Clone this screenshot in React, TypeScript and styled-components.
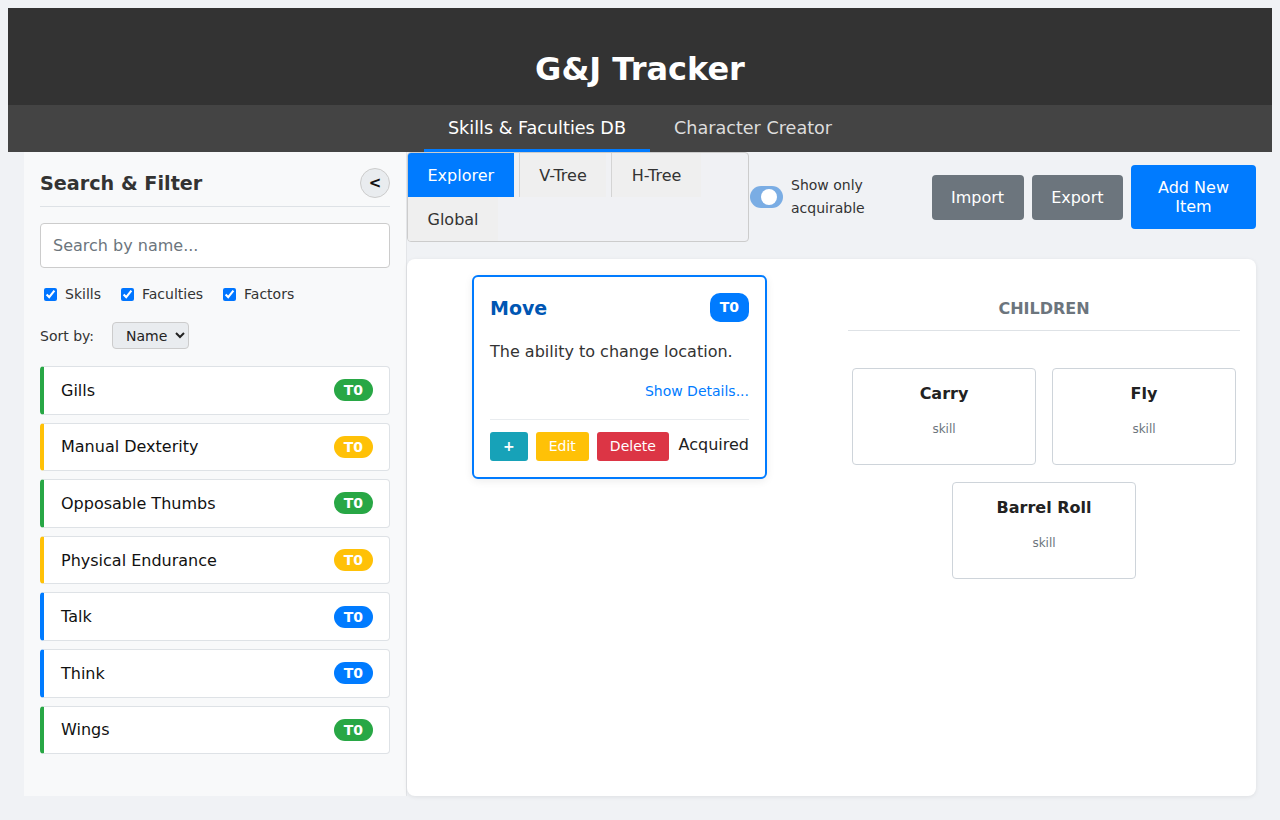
import React from "react";
import styled, { createGlobalStyle } from "styled-components";

const GlobalStyle = createGlobalStyle`
  html, body { height: 100%; }
  body {
    margin: 8px;
    background: #f0f2f5;
    font-family: "DejaVu Sans", "Noto Sans", sans-serif;
    color: #333;
  }
  * { box-sizing: border-box; }
`;

const Header = styled.header`
  background: #333;
  padding: 43px 0 17px;
  text-align: center;
`;

const Title = styled.h1`
  margin: 0;
  color: #fff;
  font-size: 32px;
  line-height: 37px;
  font-weight: 700;
`;

const Nav = styled.nav`
  background: #444;
  display: flex;
  justify-content: center;
`;

const NavTab = styled.div<{ $active?: boolean }>`
  padding: 12px 24px 9px;
  font-size: 17.6px;
  line-height: 23px;
  color: ${(p) => (p.$active ? "#fff" : "#ddd")};
  border-bottom: 3px solid ${(p) => (p.$active ? "#007bff" : "transparent")};
`;

const Content = styled.div`
  display: flex;
  height: 644px;
  padding: 0 16px;
  box-sizing: content-box;
  padding-bottom: 16px;
`;

const Sidebar = styled.aside`
  width: 383px;
  flex: 0 0 383px;
  background: #f8f9fa;
  border-right: 1px solid #e3e5e8;
  padding: 16px;
  display: flex;
  flex-direction: column;
`;

const SideHead = styled.div`
  display: flex;
  align-items: center;
  justify-content: space-between;
  padding-bottom: 8px;
  border-bottom: 1px solid #dee2e6;
`;

const SideTitle = styled.h2`
  margin: 0;
  font-size: 19.2px;
  font-weight: 700;
  color: #333;
`;

const CollapseBtn = styled.button`
  width: 30px;
  height: 30px;
  border-radius: 50%;
  border: 1px solid #ccc;
  background: #e9ecef;
  color: #111;
  font-family: inherit;
  font-weight: 700;
  font-size: 15px;
  padding: 0;
  display: flex;
  align-items: center;
  justify-content: center;
`;

const SearchInput = styled.input`
  margin-top: 16px;
  width: 100%;
  height: 45px;
  padding: 12px;
  font-size: 16px;
  font-family: inherit;
  border: 1px solid #ccc;
  border-radius: 4px;
  background: #fff;
  &::placeholder { color: #6c757d; }
`;

const CheckRow = styled.div`
  display: flex;
  align-items: center;
  margin-top: 16px;
  height: 20px;
`;

const CheckLabel = styled.label`
  display: flex;
  align-items: center;
  font-size: 14px;
  color: #333;
  margin-right: 16px;
  input {
    margin: 0 8px 0 4px;
    width: 13px;
    height: 13px;
    accent-color: #0075ff;
  }
`;

const SortRow = styled.div`
  display: flex;
  align-items: center;
  gap: 18px;
  margin-top: 18px;
  font-size: 14px;
`;

const Select = styled.select`
  height: 27px;
  width: 77px;
  padding: 0 4px 0 9px;
  font-family: inherit;
  font-size: 14px;
  color: #222;
  border: 1px solid #ccc;
  border-radius: 4px;
  background: #e9ecef;
`;

const List = styled.div`
  margin-top: 17px;
  display: flex;
  flex-direction: column;
  gap: 8px;
`;

const ItemRow = styled.div<{ $color: string }>`
  display: flex;
  align-items: center;
  justify-content: space-between;
  background: #fff;
  border: 1px solid #dee2e6;
  border-left: 4px solid ${(p) => p.$color};
  border-radius: 4px;
  padding: 0 16px 0 17px;
  height: 48.6px;
  font-size: 16px;
  color: #111;
`;

const Pill = styled.span<{ $color: string }>`
  background: ${(p) => p.$color};
  color: #fff;
  font-weight: 700;
  font-size: 14px;
  line-height: 16px;
  padding: 3px 10px;
  border-radius: 12px;
`;

const Main = styled.main`
  flex: 1;
  display: flex;
  flex-direction: column;
  min-width: 0;
`;

const Toolbar = styled.div`
  display: flex;
  align-items: center;
  justify-content: space-between;
  height: 90px;
`;

const LeftGroup = styled.div`
  display: flex;
  align-items: center;
`;

const TabBox = styled.div`
  width: 342px;
  height: 90px;
  display: flex;
  flex-wrap: wrap;
  align-content: flex-start;
  border: 1px solid #ccc;
  border-radius: 4px;
  background: #f0f1f4;
  overflow: hidden;
`;

const TabBtn = styled.button<{ $active?: boolean; $divider?: boolean }>`
  height: 44px;
  padding: 0 19.5px;
  margin-right: 5px;
  border: none;
  border-left: ${(p) => (p.$divider ? "1px solid #d4d4d4" : "none")};
  background: ${(p) => (p.$active ? "#007bff" : "#efefef")};
  color: ${(p) => (p.$active ? "#fff" : "#333")};
  font-family: inherit;
  font-size: 16px;
  &:last-child { height: 45px; }
`;

const ToggleWrap = styled.label`
  display: flex;
  align-items: center;
  margin-left: 1px;
`;

const Track = styled.span`
  position: relative;
  width: 33px;
  height: 22px;
  border-radius: 11px;
  background: #7aade4;
  flex: 0 0 33px;
`;

const Knob = styled.span`
  position: absolute;
  top: 3px;
  right: 6px;
  width: 16px;
  height: 16px;
  border-radius: 50%;
  background: #fff;
`;

const ToggleText = styled.span`
  margin-left: 8px;
  width: 80px;
  font-size: 14px;
  line-height: 23px;
  color: #333;
`;

const RightGroup = styled.div`
  display: flex;
  align-items: center;
  gap: 8px;
`;

const ActionBtn = styled.button<{ $primary?: boolean }>`
  border: none;
  border-radius: 4px;
  background: ${(p) => (p.$primary ? "#007bff" : "#6c757d")};
  color: #fff;
  font-family: inherit;
  font-size: 16px;
  line-height: 19px;
  padding: ${(p) => (p.$primary ? "13px 16px" : "13px 19.5px")};
  width: ${(p) => (p.$primary ? "125px" : "auto")};
  min-height: ${(p) => (p.$primary ? "64px" : "45px")};
`;

const Panel = styled.section`
  margin-top: 17px;
  flex: 1;
  background: #fff;
  border-radius: 8px;
  box-shadow: 0 1px 4px rgba(0, 0, 0, 0.08);
  padding: 16px;
  display: grid;
  grid-template-columns: 33px 295px 1fr;
  column-gap: 16px;
  align-items: start;
`;

const ParentsCol = styled.div``;

const FocusCard = styled.div`
  border: 2px solid #007bff;
  border-radius: 6px;
  padding: 16px;
  background: #fff;
  box-shadow: 0 2px 8px rgba(0, 0, 0, 0.08);
`;

const CardHead = styled.div`
  display: flex;
  align-items: center;
  justify-content: space-between;
`;

const CardTitle = styled.h3`
  margin: 0;
  font-size: 19px;
  font-weight: 700;
  color: #0056b3;
`;

const TierBadge = styled.span`
  background: #007bff;
  color: #fff;
  font-weight: 700;
  font-size: 14px;
  line-height: 17px;
  padding: 6px 10px;
  border-radius: 10px;
`;

const Desc = styled.p`
  margin: 20px 0 0;
  font-size: 16px;
  line-height: 19px;
  color: #333;
`;

const DetailsLink = styled.a`
  display: block;
  text-align: right;
  margin-top: 22px;
  font-size: 14px;
  line-height: 17px;
  color: #007bff;
  text-decoration: none;
`;

const CardFoot = styled.div`
  margin-top: 19px;
  padding-top: 12px;
  border-top: 1px solid #e9ecef;
  display: flex;
  align-items: center;
  gap: 8px;
`;

const SmallBtn = styled.button<{ $bg: string; $bold?: boolean }>`
  border: none;
  border-radius: 3px;
  background: ${(p) => p.$bg};
  color: #fff;
  font-family: inherit;
  font-size: 14px;
  font-weight: ${(p) => (p.$bold ? 700 : 400)};
  line-height: 17px;
  padding: 6px 13px;
`;

const Acquired = styled.span`
  margin-left: auto;
  font-size: 16px;
  color: #222;
  position: relative;
  top: -2px;
`;

const ChildrenCol = styled.div`
  padding-left: 65px;
  padding-top: 24px;
`;

const SectionTitle = styled.h4`
  margin: 0;
  text-align: center;
  font-size: 16px;
  font-weight: 700;
  color: #6c757d;
  padding-bottom: 12px;
  border-bottom: 1px solid #dee2e6;
`;

const ChildGrid = styled.div`
  margin-top: 37px;
  display: flex;
  flex-wrap: wrap;
  justify-content: center;
  gap: 17px 16px;
`;

const ChildCard = styled.div`
  width: 184px;
  height: 97px;
  border: 1px solid #ced4da;
  border-radius: 4px;
  background: #fff;
  padding: 15px 8px;
  text-align: center;
`;

const ChildName = styled.div`
  font-size: 16px;
  font-weight: 700;
  color: #222;
`;

const ChildType = styled.div`
  margin-top: 19px;
  font-size: 12px;
  color: #6c757d;
`;

const items = [
  { name: "Gills", color: "#28a745" },
  { name: "Manual Dexterity", color: "#ffc107" },
  { name: "Opposable Thumbs", color: "#28a745" },
  { name: "Physical Endurance", color: "#ffc107" },
  { name: "Talk", color: "#007bff" },
  { name: "Think", color: "#007bff" },
  { name: "Wings", color: "#28a745" },
];

const children = ["Carry", "Fly", "Barrel Roll"];

export default function App() {
  return (
    <>
      <GlobalStyle />
      <Header>
        <Title>G&amp;J Tracker</Title>
      </Header>
      <Nav>
        <NavTab $active>Skills &amp; Faculties DB</NavTab>
        <NavTab>Character Creator</NavTab>
      </Nav>
      <Content>
        <Sidebar>
          <SideHead>
            <SideTitle>Search &amp; Filter</SideTitle>
            <CollapseBtn>&lt;</CollapseBtn>
          </SideHead>
          <SearchInput placeholder="Search by name..." />
          <CheckRow>
            <CheckLabel>
              <input type="checkbox" defaultChecked />
              Skills
            </CheckLabel>
            <CheckLabel>
              <input type="checkbox" defaultChecked />
              Faculties
            </CheckLabel>
            <CheckLabel>
              <input type="checkbox" defaultChecked />
              Factors
            </CheckLabel>
          </CheckRow>
          <SortRow>
            <span>Sort by:</span>
            <Select defaultValue="name">
              <option value="name">Name</option>
            </Select>
          </SortRow>
          <List>
            {items.map((it) => (
              <ItemRow key={it.name} $color={it.color}>
                <span>{it.name}</span>
                <Pill $color={it.color}>T0</Pill>
              </ItemRow>
            ))}
          </List>
        </Sidebar>
        <Main>
          <Toolbar>
            <LeftGroup>
              <TabBox>
                <TabBtn $active>Explorer</TabBtn>
                <TabBtn $divider>V-Tree</TabBtn>
                <TabBtn $divider>H-Tree</TabBtn>
                <TabBtn>Global</TabBtn>
              </TabBox>
              <ToggleWrap>
                <Track>
                  <Knob />
                </Track>
                <ToggleText>Show only acquirable</ToggleText>
              </ToggleWrap>
            </LeftGroup>
            <RightGroup>
              <ActionBtn>Import</ActionBtn>
              <ActionBtn>Export</ActionBtn>
              <ActionBtn $primary>Add New Item</ActionBtn>
            </RightGroup>
          </Toolbar>
          <Panel>
            <ParentsCol />
            <FocusCard>
              <CardHead>
                <CardTitle>Move</CardTitle>
                <TierBadge>T0</TierBadge>
              </CardHead>
              <Desc>The ability to change location.</Desc>
              <DetailsLink href="#">Show Details...</DetailsLink>
              <CardFoot>
                <SmallBtn $bg="#17a2b8" $bold>+</SmallBtn>
                <SmallBtn $bg="#ffc107">Edit</SmallBtn>
                <SmallBtn $bg="#dc3545">Delete</SmallBtn>
                <Acquired>Acquired</Acquired>
              </CardFoot>
            </FocusCard>
            <ChildrenCol>
              <SectionTitle>CHILDREN</SectionTitle>
              <ChildGrid>
                {children.map((c) => (
                  <ChildCard key={c}>
                    <ChildName>{c}</ChildName>
                    <ChildType>skill</ChildType>
                  </ChildCard>
                ))}
              </ChildGrid>
            </ChildrenCol>
          </Panel>
        </Main>
      </Content>
    </>
  );
}
